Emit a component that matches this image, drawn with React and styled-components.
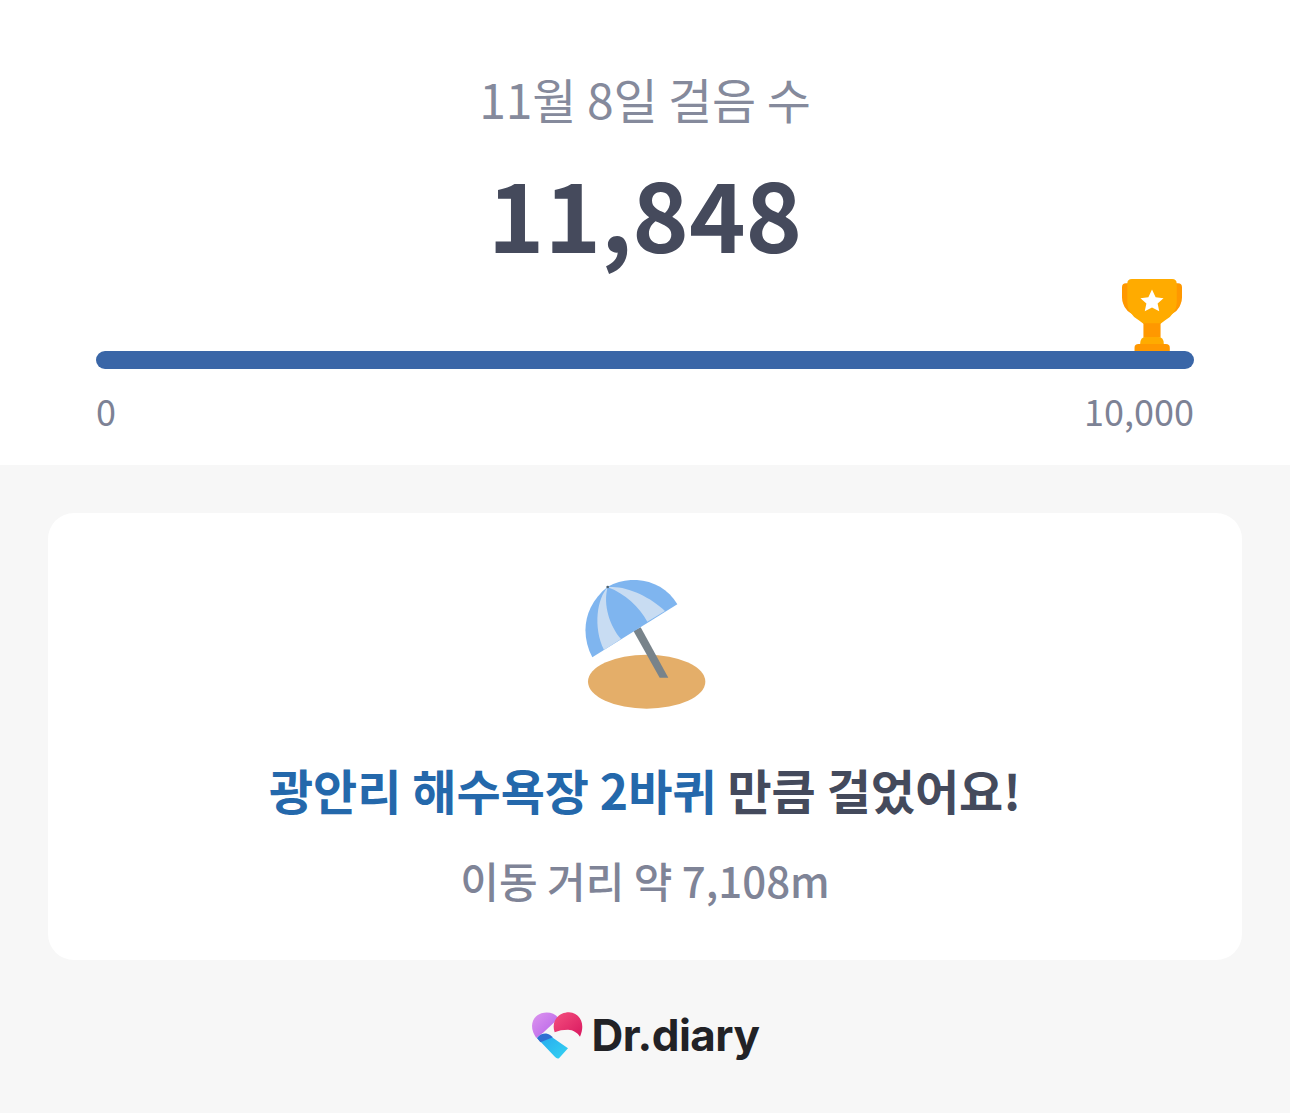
import React from "react";
import styled, { createGlobalStyle } from "styled-components";

const Global = createGlobalStyle`
  html, body { margin: 0; padding: 0; background: #f7f7f7; }
  body { font-family: "Noto Sans CJK KR", "Noto Sans", sans-serif; }
`;

const Page = styled.div`
  width: 1290px;
  height: 1113px;
  overflow: hidden;
  background: #f7f7f7;
`;

const Summary = styled.section`
  height: 465px;
  box-sizing: border-box;
  background: #fff;
  padding: 69px 96px 0;
  display: flex;
  flex-direction: column;
`;

const DateTitle = styled.div`
  font-size: 48px;
  line-height: 58px;
  font-weight: 400;
  letter-spacing: -0.15px;
  color: #858a9c;
  text-align: center;
`;

const StepCount = styled.div`
  margin-top: 25px;
  font-size: 96px;
  line-height: 120px;
  font-weight: 700;
  color: #454a5c;
  text-align: center;
`;

const TrophyRow = styled.div`
  margin-top: 7px;
  height: 72px;
  display: flex;
  justify-content: flex-end;
  padding-right: 12px;
`;

const Track = styled.div`
  height: 18px;
  border-radius: 9px;
  background: #3a66a7;
`;

const Scale = styled.div`
  margin-top: 19px;
  display: flex;
  justify-content: space-between;
  font-size: 36px;
  line-height: 44px;
  font-weight: 400;
  color: #7d8295;
`;

const Card = styled.section`
  margin: 48px 48px 0;
  height: 447px;
  box-sizing: border-box;
  background: #fff;
  border-radius: 26px;
  padding-top: 67px;
  display: flex;
  flex-direction: column;
  align-items: center;
`;

const Headline = styled.div`
  margin-top: 49px;
  font-size: 48px;
  line-height: 60px;
  font-weight: 700;
  color: #444a5c;
`;

const Accent = styled.span`
  color: #2468ab;
`;

const Distance = styled.div`
  margin-top: 35px;
  font-size: 42px;
  line-height: 52px;
  font-weight: 500;
  color: #7f8497;
`;

const Footer = styled.footer`
  margin-top: 46px;
  display: flex;
  justify-content: center;
  align-items: center;
  gap: 7px;
  height: 58px;
`;

const Wordmark = styled.span`
  font-family: Inter, sans-serif;
  font-size: 44px;
  line-height: 58px;
  font-weight: 700;
  letter-spacing: -0.5px;
  color: #222226;
`;

const Trophy = () => (
  <svg width="60" height="72" viewBox="20 14 182 218">
    <path d="M32 27H60V125Q30 112 24 90Q20 80 20 70V39Q20 27 32 27Z" fill="#ff9800" />
    <path d="M190 27H162V125Q192 112 198 90Q202 80 202 70V39Q202 27 190 27Z" fill="#ff9800" />
    <path d="M50 14H172Q186 14 186 28V85Q186 118 150 140L136 150H86L72 140Q36 118 36 85V28Q36 14 50 14Z" fill="#ffab00" />
    <rect x="85" y="148" width="52" height="44" fill="#ff9800" />
    <path d="M75 212Q75 190 92 190H130Q147 190 147 212Z" fill="#ffab00" />
    <path d="M58 232V222Q58 211 70 211H153Q165 211 165 222V232Z" fill="#ff9800" />
    <path d="M111 46L122 69L146 72L128 88L133 112L111 100L89 112L94 88L76 72L100 69Z" fill="#fff" />
  </svg>
);

const Umbrella = () => (
  <svg width="130" height="130" viewBox="60 30 390 390">
    <ellipse cx="260" cy="335" rx="176" ry="81" fill="#e4ae69" />
    <path d="M220 182l22-10 83 151h-26z" fill="#78838a" />
    <path d="M97 262C62 195 68 110 143 50C215 10 310 30 352 103z" fill="#7fb5ef" />
    <path d="M143 52C112 85 98 170 132 240L183 207C150 170 128 105 143 52z" fill="#c8dcf2" />
    <path d="M143 52C195 45 270 80 315 123L262 155C238 112 195 70 143 52z" fill="#c8dcf2" />
    <circle cx="143" cy="51" r="4" fill="#4f6270" />
  </svg>
);

const Logo = () => (
  <svg width="54" height="49" viewBox="14 16 162 147">
    <defs>
      <linearGradient id="logoPurple" x1="0" y1="0" x2="1" y2="1">
        <stop offset="0" stopColor="#dd96ef" />
        <stop offset="1" stopColor="#b45ee8" />
      </linearGradient>
      <linearGradient id="logoPink" x1="0" y1="0" x2="1" y2="1">
        <stop offset="0" stopColor="#f4507f" />
        <stop offset="1" stopColor="#d9185f" />
      </linearGradient>
      <linearGradient id="logoBlue" x1="0" y1="0" x2="1" y2="1">
        <stop offset="0" stopColor="#25a6ee" />
        <stop offset="1" stopColor="#35d3f2" />
      </linearGradient>
    </defs>
    <path d="M30 97C10 70 12 35 45 23C65 17 85 22 97 38L52 80Z" fill="url(#logoPurple)" />
    <path d="M85 80C73 45 98 20 128 20C162 22 178 55 161 93C155 82 140 72 125 72C110 72 97 74 85 80Z" fill="url(#logoPink)" />
    <path d="M32 97L62 84L125 128L98 158C92 160 88 156 84 152Z" fill="url(#logoBlue)" />
    <path d="M32 97C40 86 52 82 62 84C68 85 75 90 80 95L42 110Z" fill="#2f6fd2" />
  </svg>
);

export default function App() {
  return (
    <>
      <Global />
      <Page>
        <Summary>
          <DateTitle>11월 8일 걸음 수</DateTitle>
          <StepCount>11,848</StepCount>
          <TrophyRow>
            <Trophy />
          </TrophyRow>
          <Track />
          <Scale>
            <span>0</span>
            <span>10,000</span>
          </Scale>
        </Summary>
        <Card>
          <Umbrella />
          <Headline>
            <Accent>광안리 해수욕장 2바퀴</Accent> 만큼 걸었어요!
          </Headline>
          <Distance>이동 거리 약 7,108m</Distance>
        </Card>
        <Footer>
          <Logo />
          <Wordmark>Dr.diary</Wordmark>
        </Footer>
      </Page>
    </>
  );
}
